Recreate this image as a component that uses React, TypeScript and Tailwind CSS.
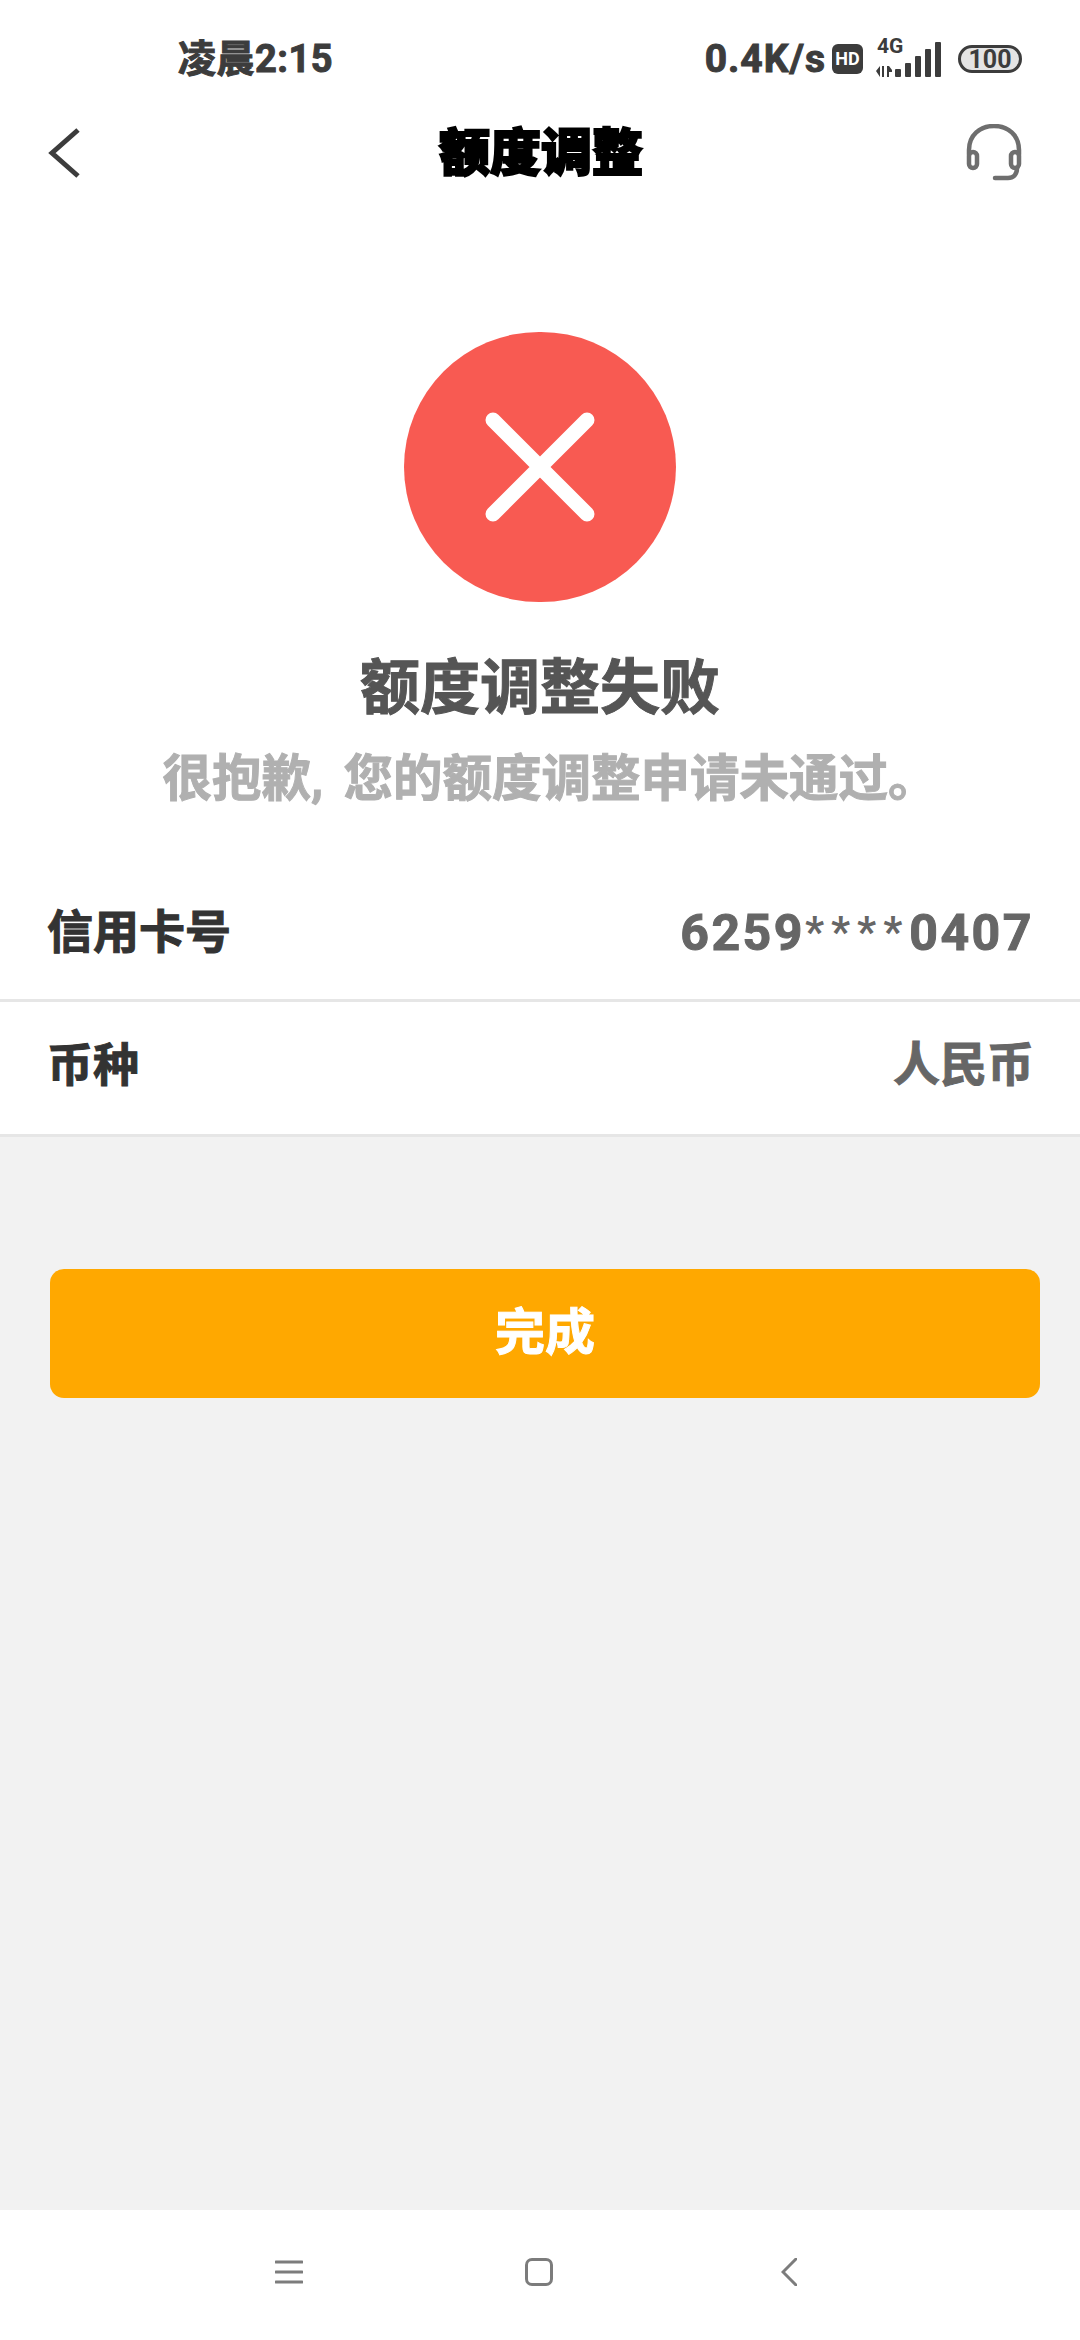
import type { ReactNode } from "react";

const BackIcon = () => (
  <svg width="32" height="50" viewBox="0 0 32 50" fill="none" stroke="#3c3c3c" strokeWidth="5">
    <path d="M30 2 L4 25 L30 48" />
  </svg>
);

const HeadsetIcon = () => (
  <svg width="56" height="58" viewBox="0 0 56 58" fill="none" stroke="#6e6e6e" strokeWidth="4.5" strokeLinecap="round">
    <path d="M3 30 V26 C3 11 14 2 28 2 C42 2 53 11 53 26 V30" />
    <rect x="3" y="28" width="8" height="16" rx="4" />
    <rect x="45" y="28" width="8" height="16" rx="4" />
    <path d="M51 44 C51 51 47 54 42 54 H29" />
  </svg>
);

const CloseCircle = () => (
  <div className="w-[272px] h-[270px] rounded-full bg-[#f85a52] flex items-center justify-center">
    <svg width="110" height="110" viewBox="0 0 110 110" stroke="#ffffff" strokeWidth="15" strokeLinecap="round">
      <path d="M8 8 L102 102 M102 8 L8 102" />
    </svg>
  </div>
);

const SignalIcon = () => (
  <div className="relative w-[68px] h-[36px]">
    <span className="absolute left-[2px] top-[-5px] text-[21px] leading-[21px] font-bold text-[#3c3c3c]">4G</span>
    <svg className="absolute left-0 bottom-0" width="68" height="36" viewBox="0 0 68 36" fill="#3c3c3c">
      <path d="M1 30 L5 25 V36 Z M7 25 H9 V36 H7 Z M12 25 H14 L17 29 V31 H14 V36 H12 Z" />
      <rect x="20" y="28" width="6" height="8" rx="1" />
      <rect x="30" y="22" width="6" height="14" rx="1" />
      <rect x="40" y="15" width="6" height="21" rx="1" />
      <rect x="50" y="8" width="6" height="28" rx="1" />
      <rect x="60" y="1" width="6" height="35" rx="1" />
    </svg>
  </div>
);

const Battery = () => (
  <div className="w-[64px] h-[28px] rounded-full border-[3px] border-[#3c3c3c] bg-[#e4e4e4] flex items-center justify-center text-[25px] leading-none font-bold text-[#3c3c3c]">
    100
  </div>
);

const InfoRow = ({
  label,
  value,
  className,
  valueClass,
}: {
  label: string;
  value: ReactNode;
  className: string;
  valueClass: string;
}) => (
  <div className={`flex justify-between bg-white border-b-[3px] border-[#e6e6e6] pl-[47px] pr-[46px] ${className}`}>
    <span className="text-[46px] leading-[60px] font-bold text-[#333333] [-webkit-text-stroke-width:1px]">{label}</span>
    <span className={`leading-[60px] font-bold text-[#666666] [-webkit-text-stroke-width:1px] ${valueClass}`}>{value}</span>
  </div>
);

export default function App() {
  return (
    <div className="w-[1080px] h-[2340px] flex flex-col bg-[#f2f2f2] font-['Roboto','Noto_Sans_CJK_SC',sans-serif]">
      <div className="bg-white">
        {/* status bar */}
        <div className="h-[100px] flex items-center justify-between pl-[178px] pr-[58px] pt-[18px] text-[#3c3c3c]">
          <span className="text-[38px] leading-none font-bold tracking-[0.5px] [-webkit-text-stroke-width:1px]">凌晨2:15</span>
          <div className="flex items-center">
            <span className="text-[39px] leading-none font-bold tracking-[1px] [-webkit-text-stroke-width:1px]">0.4K/s</span>
            <span className="ml-[6px] w-[31px] h-[30px] rounded-[6px] bg-[#3c3c3c] text-white text-[18px] leading-[30px] font-bold text-center">HD</span>
            <div className="ml-[12px]">
              <SignalIcon />
            </div>
            <div className="ml-[15px]">
              <Battery />
            </div>
          </div>
        </div>

        {/* header */}
        <div className="h-[105px] flex items-center pl-[48px] pr-[58px]">
          <div className="flex-1">
            <BackIcon />
          </div>
          <span className="ml-[12px] mt-[2px] text-[51px] leading-none font-black text-black [-webkit-text-stroke-width:2px]">额度调整</span>
          <div className="flex-1 flex justify-end">
            <HeadsetIcon />
          </div>
        </div>

        {/* result */}
        <div className="flex flex-col items-center pt-[127px]">
          <CloseCircle />
          <h1 className="mt-[52px] text-[60px] leading-[70px] font-bold text-[#555555] [-webkit-text-stroke-width:1px]">额度调整失败</h1>
          <p className="mt-[25px] ml-[20px] text-[49.5px] leading-[60px] font-bold text-[#b0b0b0] whitespace-nowrap [word-spacing:8px] [-webkit-text-stroke-width:1px]">很抱歉, 您的额度调整申请未通过。</p>
        </div>
      </div>

      <InfoRow
        label="信用卡号"
        value={
          <>
            6259
            <span className="text-[42px] tracking-[7px] align-[4px] [-webkit-text-stroke-width:0px]">****</span>
            0407
          </>
        }
        valueClass="text-[50px] tracking-[2.5px]"
        className="pt-[93px] h-[193px]"
      />
      <InfoRow label="币种" value="人民币" valueClass="text-[47px]" className="pt-[33px] h-[135px]" />

      <div className="flex-1 pl-[50px] pt-[132px]">
        <button className="w-[990px] h-[129px] rounded-[14px] bg-[#ffa800] text-white text-[50px] font-bold [-webkit-text-stroke-width:1px]">完成</button>
      </div>

      {/* nav bar */}
      <div className="h-[130px] bg-white flex items-start pt-[50px] pl-[275px]">
        <svg width="28" height="24" viewBox="0 0 28 24" stroke="#7c7c7c" strokeWidth="3" strokeLinecap="round">
          <path d="M1 2 H27 M1 12 H27 M1 22 H27" />
        </svg>
        <div className="ml-[222px] mt-[-2px] w-[28px] h-[28px] rounded-[7px] border-[3px] border-[#7c7c7c]" />
        <svg className="ml-[228px] mt-[-2px]" width="16" height="28" viewBox="0 0 16 28" fill="none" stroke="#7c7c7c" strokeWidth="3" strokeLinecap="round">
          <path d="M15 1 L2 14 L15 27" />
        </svg>
      </div>
    </div>
  );
}
